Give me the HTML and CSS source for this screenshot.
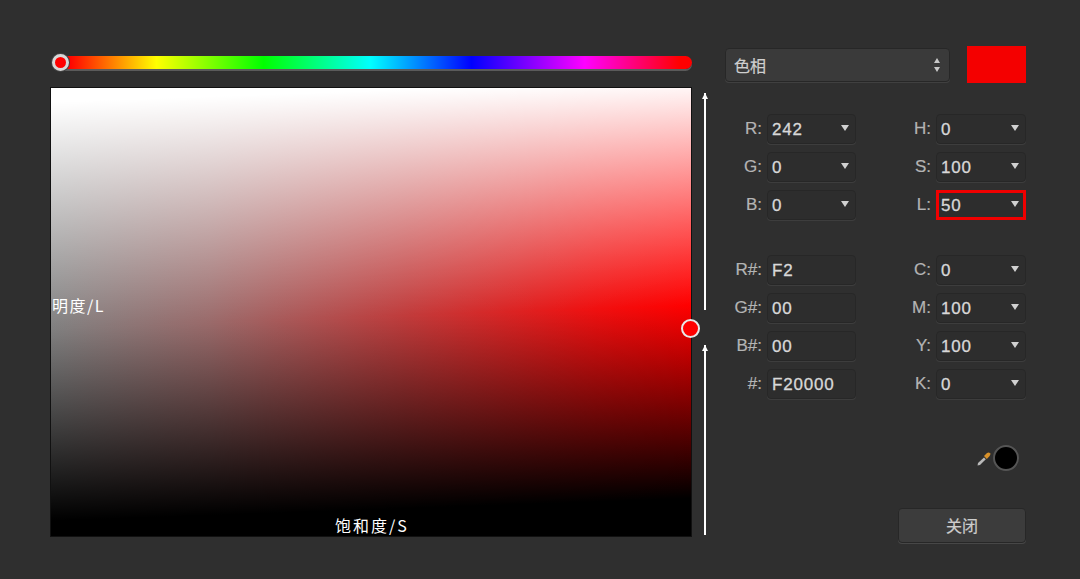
FILE: index.html
```html
<!DOCTYPE html>
<html lang="zh-CN">
<head>
    <meta charset="UTF-8">
    <meta name="viewport" content="width=device-width, initial-scale=1.0">
    <title>颜色选择器</title>
    <link rel="stylesheet" href="styles.css">
</head>
<body>
    <div class="dialog">
        <div class="picker">
            <div class="hue-bar">
                <span class="hue-thumb"></span>
            </div>
            <div class="sat-map">
                <span class="axis axis-l">明度/L</span>
                <span class="axis axis-s">饱和度/S</span>
                <span class="map-thumb"></span>
            </div>
        </div>

        <div class="arrows">
            <div class="arrow arrow-top"></div>
            <div class="arrow arrow-bottom"></div>
        </div>

        <div class="controls">
            <div class="mode-row">
                <div class="mode-select">
                    <span>色相</span>
                    <span class="stepper"><i class="up"></i><i class="down"></i></span>
                </div>
                <div class="swatch"></div>
            </div>

            <div class="fields">
                <label>R:</label><div class="field">242<i class="caret"></i></div>
                <label>H:</label><div class="field">0<i class="caret"></i></div>
                <label>G:</label><div class="field">0<i class="caret"></i></div>
                <label>S:</label><div class="field">100<i class="caret"></i></div>
                <label>B:</label><div class="field">0<i class="caret"></i></div>
                <label>L:</label><div class="field active">50<i class="caret"></i></div>
            </div>

            <div class="fields fields-hex">
                <label>R#:</label><div class="field">F2</div>
                <label>C:</label><div class="field">0<i class="caret"></i></div>
                <label>G#:</label><div class="field">00</div>
                <label>M:</label><div class="field">100<i class="caret"></i></div>
                <label>B#:</label><div class="field">00</div>
                <label>Y:</label><div class="field">100<i class="caret"></i></div>
                <label>#:</label><div class="field">F20000</div>
                <label>K:</label><div class="field">0<i class="caret"></i></div>
            </div>

            <div class="sample-row">
                <svg class="dropper" width="16" height="16" viewBox="0 0 16 16">
                    <path d="M1.5 14.5 L2 12 L8 6.5 L9.8 8.2 L4 14 Z" fill="#b9b9b9"/>
                    <path d="M8 5 L11 2 Q13 1 14 2.2 Q15 3.5 13.6 5 L10.8 8 Z" fill="#d8912a"/>
                </svg>
                <div class="sample"></div>
            </div>

            <div class="button-row">
                <div class="close-btn">关闭</div>
            </div>
        </div>
    </div>
</body>
</html>
```

FILE: styles.css
```css
html, body {
    margin: 0;
    height: 100%;
}

body {
    background-color: #2f2f2f;
    color: #d6d6d6;
    font-family: "Liberation Sans", "Noto Sans CJK SC", sans-serif;
    overflow: hidden;
}

.dialog {
    display: flex;
    padding: 46px 0 0 50px;
}

/* left side */
.picker {
    width: 642px;
}

.hue-bar {
    position: relative;
    height: 13px;
    margin: 10px 0 18px 12px;
    border-radius: 0 7px 7px 0;
    background: linear-gradient(to right, #f00 1%, #ff0 15%, #0f0 32%, #0ff 49%, #00f 65%, #f0f 83%, #f00 98%);
    box-shadow: 0 2px 0 #5a5a5a;
}

.hue-thumb {
    position: absolute;
    left: -10px;
    top: -2px;
    width: 11px;
    height: 11px;
    border: 3px solid #d8d8d8;
    border-radius: 50%;
    background-color: #f00;
    box-shadow: 0 0 0 1px #444;
}

.sat-map {
    position: relative;
    height: 450px;
    border: 1px solid #111;
    box-sizing: border-box;
    background:
        linear-gradient(178deg, #fff 3%, rgba(255, 255, 255, 0) 51%),
        linear-gradient(178deg, rgba(0, 0, 0, 0) 51%, #000 92%),
        linear-gradient(to right, #808080, #9a6a6a 25%, #c03c3c 55%, #f01010 85%, #f00);
}

.axis {
    position: absolute;
    color: #fff;
    font-family: "Noto Sans CJK SC", sans-serif;
    font-size: 16px;
    line-height: 20px;
}

.axis-l {
    left: 1px;
    top: 207px;
    letter-spacing: 1.5px;
}

.axis-s {
    left: 284px;
    top: 427px;
    letter-spacing: 2px;
}

.map-thumb {
    position: absolute;
    right: -9px;
    top: 231px;
    width: 15px;
    height: 15px;
    border: 2px solid #e8e8e8;
    border-radius: 50%;
    background-color: #f00;
}

/* the two arrows */
.arrows {
    display: flex;
    flex-direction: column;
    width: 33px;
    padding-top: 47px;
    box-sizing: border-box;
}

.arrow {
    position: relative;
    width: 2px;
    margin-left: 12px;
    background-color: #fff;
}

.arrow::before {
    content: "";
    position: absolute;
    left: -2px;
    top: 0;
    border-left: 3px solid transparent;
    border-right: 3px solid transparent;
    border-bottom: 6px solid #fff;
}

.arrow-top {
    height: 217px;
}

.arrow-bottom {
    height: 190px;
    margin-top: 35px;
}

/* right side */
.controls {
    width: 302px;
}

.mode-row {
    display: flex;
    justify-content: space-between;
    height: 37px;
}

.mode-select {
    display: flex;
    align-items: center;
    justify-content: space-between;
    width: 225px;
    height: 34px;
    margin-top: 2px;
    padding: 0 9px 0 8px;
    box-sizing: border-box;
    border: 1px solid #272727;
    border-radius: 4px;
    background-color: #3a3a3a;
    box-shadow: 0 1px 0 #404040;
    font-family: "Noto Sans CJK SC", sans-serif;
    font-size: 16px;
    color: #cfcfcf;
    -webkit-text-stroke: 0.2px;
}

.stepper {
    display: flex;
    flex-direction: column;
    gap: 4px;
}

.stepper i {
    display: block;
    border-left: 3px solid transparent;
    border-right: 3px solid transparent;
}

.stepper .up {
    border-bottom: 5px solid #c8c8c8;
}

.stepper .down {
    border-top: 5px solid #c8c8c8;
}

.swatch {
    width: 59px;
    margin-right: 1px;
    height: 37px;
    background-color: #f40000;
}

.fields {
    display: grid;
    grid-template-columns: 37px 89px 70px 90px;
    grid-auto-rows: 30px;
    column-gap: 5px;
    row-gap: 8px;
    margin-top: 31px;
}

.fields-hex {
    margin-top: 35px;
}

.fields label {
    font-size: 17px;
    line-height: 29px;
    text-align: right;
    color: #b4b4b4;
    -webkit-text-stroke: 0.2px;
}

.field {
    position: relative;
    height: 30px;
    padding-left: 4px;
    box-sizing: border-box;
    border: 1px solid #272727;
    border-radius: 4px;
    background-color: #2d2d2d;
    box-shadow: 0 1px 0 #3d3d3d;
    font-size: 17px;
    line-height: 29px;
    letter-spacing: 0.8px;
    color: #d8d8d8;
    -webkit-text-stroke: 0.3px;
}

.field.active {
    border: 3px solid #f00000;
    border-radius: 0;
    padding-left: 2px;
    line-height: 26px;
    box-shadow: none;
}

.caret {
    position: absolute;
    right: 6px;
    top: 10px;
    border-left: 4px solid transparent;
    border-right: 4px solid transparent;
    border-top: 6px solid #d0d0d0;
}

.field.active .caret {
    right: 4px;
    top: 8px;
}

.sample-row {
    display: flex;
    align-items: center;
    justify-content: flex-end;
    gap: 1px;
    margin-top: 46px;
    padding-right: 8px;
}

.sample {
    width: 22px;
    height: 22px;
    border: 2px solid #555;
    border-radius: 50%;
    background-color: #000;
}

.dropper {
    margin-top: 1px;
}

.button-row {
    display: flex;
    justify-content: flex-end;
    margin-top: 37px;
    padding-right: 1px;
}

.close-btn {
    width: 128px;
    height: 35px;
    box-sizing: border-box;
    border: 1px solid #272727;
    border-radius: 4px;
    background-color: #3c3c3c;
    box-shadow: 0 1px 0 #474747;
    font-family: "Noto Sans CJK SC", sans-serif;
    font-size: 16px;
    line-height: 33px;
    text-align: center;
    color: #cdcdcd;
    -webkit-text-stroke: 0.2px;
}
```
